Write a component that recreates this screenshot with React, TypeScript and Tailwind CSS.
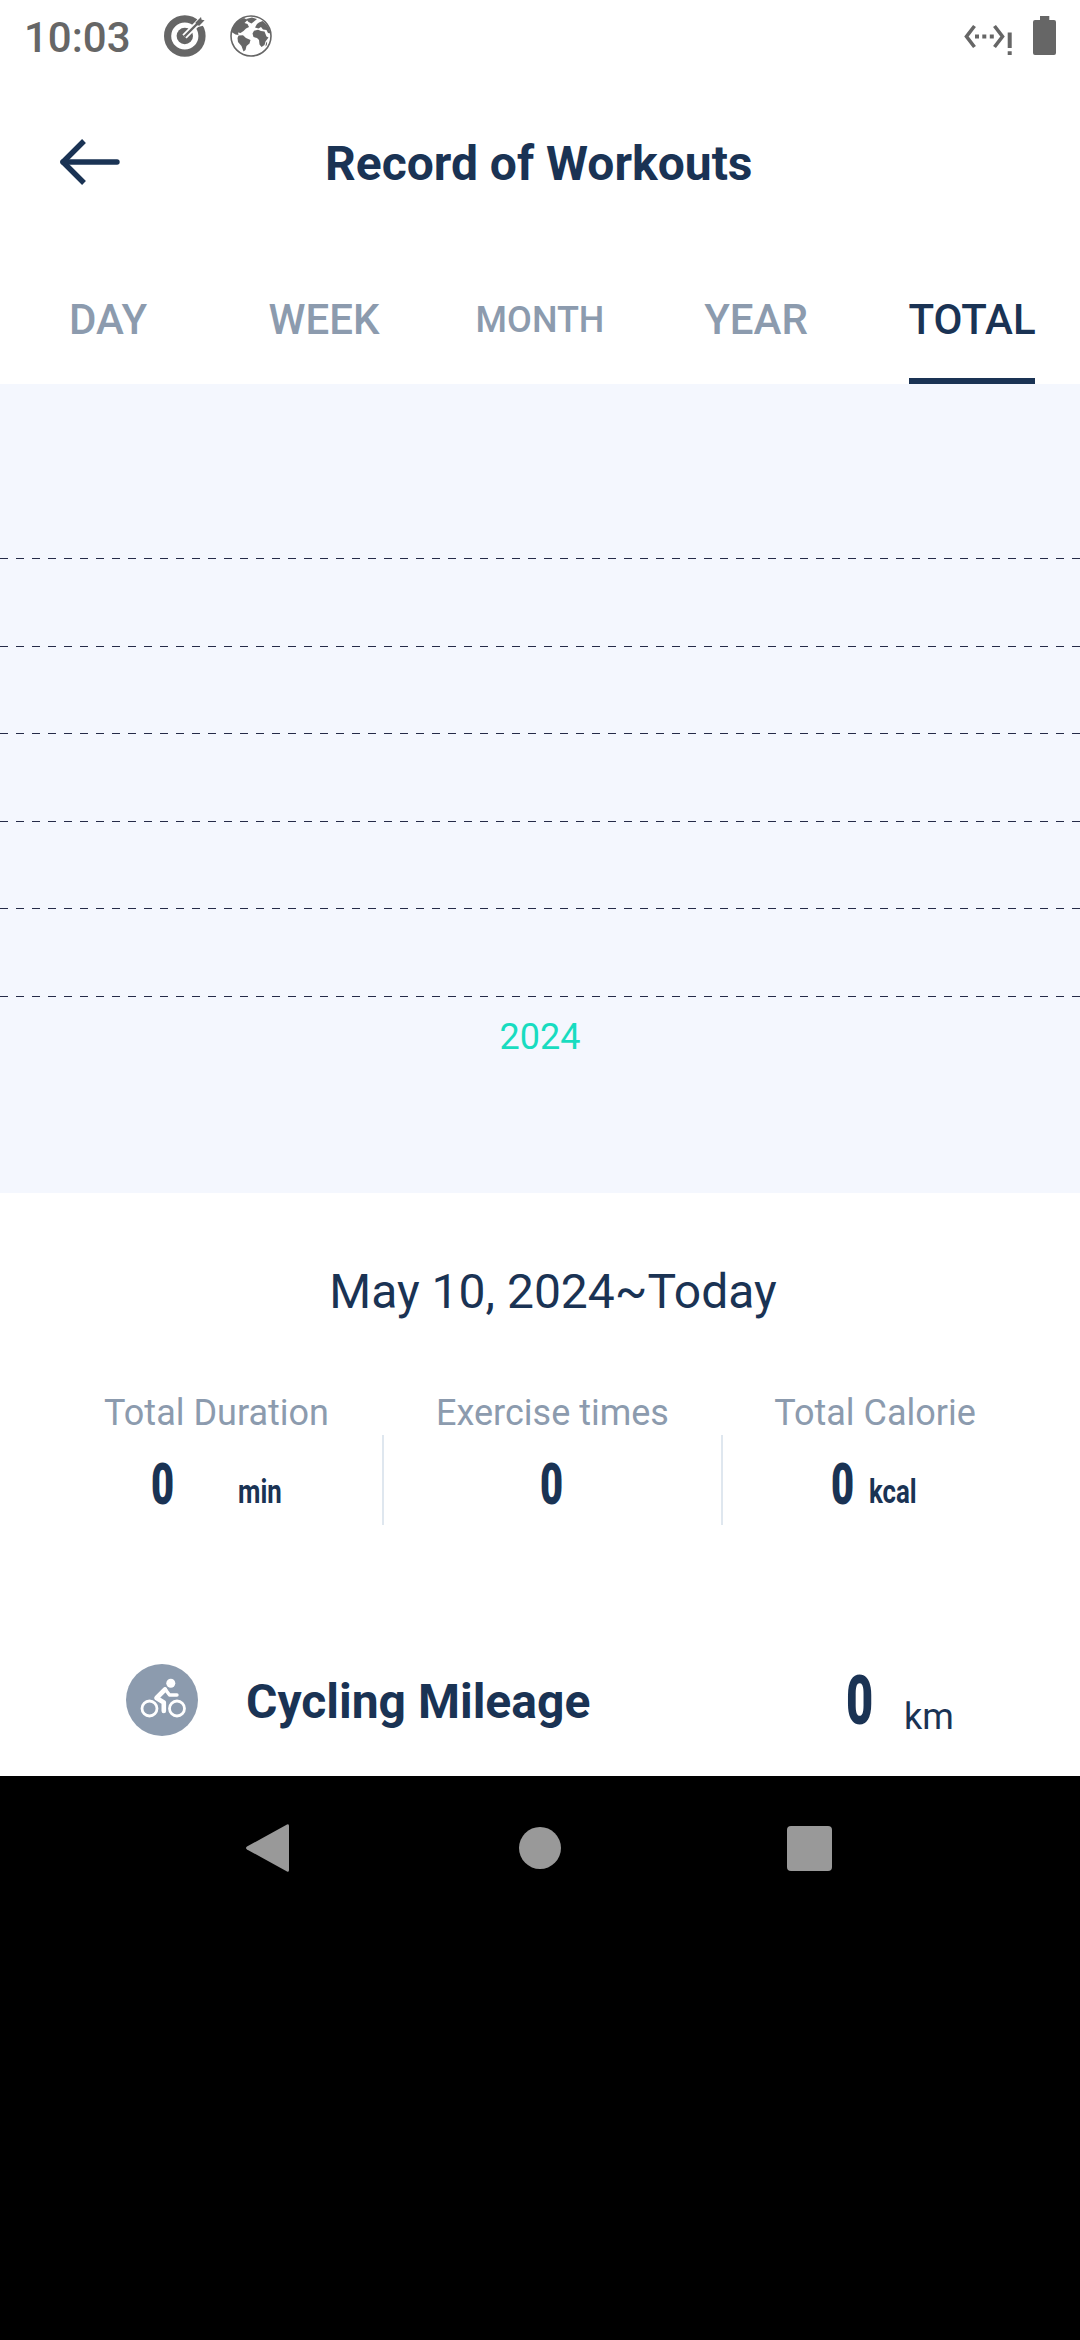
const gridLines = [174, 262, 349, 437, 524, 612];

const tabs = [
  { label: 'DAY', cls: 'text-[42px] pt-[43px]' },
  { label: 'WEEK', cls: 'text-[42px] pt-[43px]' },
  { label: 'MONTH', cls: 'text-[36px] pt-[46px]' },
  { label: 'YEAR', cls: 'text-[42px] pt-[43px]' },
];

function TargetIcon() {
  return (
    <svg className="ml-[36px] h-[42px] w-[42px]" viewBox="0 0 42 42" fill="none">
      <circle cx="20.8" cy="21" r="17.2" stroke="#666" strokeWidth="7.2" />
      <circle cx="20.8" cy="21" r="8.2" fill="#666" />
      <path d="M20.5 21.5 L36 6" stroke="#fff" strokeWidth="6" />
      <path d="M31 8 L36 1 L42 0 L42 10 L34 12 Z" fill="#fff" />
      <path d="M20.5 21.5 L35 7" stroke="#666" strokeWidth="2.4" />
      <path d="M31.5 7.5 L37 2 L37.6 4.8 L40.6 5.3 L35.3 10.8 L32.2 10 Z" fill="#666" />
    </svg>
  );
}

function GlobeIcon() {
  return (
    <svg className="ml-[24px] h-[42px] w-[42px]" viewBox="0 0 42 42" fill="none">
      <circle cx="21" cy="21" r="20" stroke="#666" strokeWidth="1.6" />
      <path d="M14 3 L17.5 5 L14.5 8 L17.5 9 L19 12 L16 13.5 L13.5 16 L10.5 18 L8 17.5 L8.5 20 L5.5 19.5 L1.5 17 C2.5 10.5 7.5 5 14 3 Z" fill="#666" />
      <path d="M16 4 L22 2.6 L27 4 L24 6.5 L21.5 8.5 L18.5 7 Z" fill="#666" />
      <path d="M8.5 20.5 L13 20.2 L16 23 L20.5 25 L19.5 28.5 L16.5 31 L15.5 35 L13.5 36.5 L11.5 31 L8 27 L7.5 23 Z" fill="#666" />
      <path d="M24 15.8 L28 14.8 L31 16 L34.5 16.5 L36.5 21.5 L38.5 22.5 L35.5 26.5 L34.5 30 L31.5 32 L29.5 29.5 L29 25 L27 23 L23.5 22 L22.5 18.5 Z" fill="#666" />
      <path d="M25 12.5 L27 9 L29 7.5 L32.5 6 C37 9.5 39.8 13 40.6 18.5 L38 18 L36.5 15 L33 14.5 L31 12 L28.5 13.5 Z" fill="#666" />
      <path d="M36 28 L37.2 26.5 L36.8 30 L35.5 31.5 Z" fill="#666" />
    </svg>
  );
}

function StatusBar() {
  return (
    <div className="flex h-[72px] items-start pt-[15px]">
      <span className="ml-[24px] mt-[2px] w-[104px] whitespace-nowrap text-[42px] font-medium leading-none text-[#666666]">10:03</span>
      <TargetIcon />
      <GlobeIcon />
      <svg className="ml-auto mt-[8px] h-[34px] w-[49px]" viewBox="0 0 49 34" fill="none">
        <path d="M10.5 3 L2.5 13.5 L10.5 24 M30.5 3 L38.5 13.5 L30.5 24" stroke="#666" strokeWidth="3.6" />
        <path d="M11 11.5h4v4h-4z M18.3 11.5h4v4h-4z M25.8 11.5h4v4h-4z M43.7 9.5h4v15.5h-4z M43.7 28.3h4v3.7h-4z" fill="#666" />
      </svg>
      <svg className="ml-[20px] mr-[24px] mt-px h-[39px] w-[23px]" viewBox="0 0 23 39">
        <path d="M7 0h9.3v4H21q2 0 2 2v31q0 2-2 2H2q-2 0-2-2V6q0-2 2-2h5z" fill="#666" />
      </svg>
    </div>
  );
}

function Num({ big = false }: { big?: boolean }) {
  return big ? (
    <span className="inline-block origin-left scale-x-[0.69] text-[68px] font-black leading-none">0</span>
  ) : (
    <span className="inline-block origin-left scale-x-[0.7] text-[57px] font-black leading-none">0</span>
  );
}

function Unit({ children }: { children: string }) {
  return <span className="relative -top-px inline-block origin-left scale-x-[0.76] text-[34px] font-bold leading-none">{children}</span>;
}

export default function App() {
  return (
    <div className="flex h-[2340px] w-[1080px] flex-col overflow-hidden bg-black font-['Roboto',sans-serif]">
      <div className="flex h-[1776px] flex-col bg-white text-[#1a3354]">
        <StatusBar />

        <header className="flex h-[184px] items-start">
          <svg className="ml-[58px] mt-[66px] h-[48px] w-[64px]" viewBox="0 0 64 48" fill="none" stroke="#1a3354" strokeWidth="5.4">
            <path d="M26 3 L5 24 L26 45" strokeLinejoin="round" />
            <path d="M5 24 H59" strokeLinecap="round" />
          </svg>
          <h1 className="ml-[203px] mt-[68px] whitespace-nowrap text-[48px] font-bold leading-none">Record of Workouts</h1>
        </header>

        <nav className="grid h-[128px] grid-cols-5 text-center font-medium leading-none">
          {tabs.map((t) => (
            <div key={t.label} className={'leading-none text-[#8c9bae] ' + t.cls}>{t.label}</div>
          ))}
          <div className="flex flex-col items-center pt-[43px] text-[42px] leading-none">
            <span>TOTAL</span>
            <div className="mt-auto h-[6px] w-[126px] bg-[#1a3354]" />
          </div>
        </nav>

        <section className="h-[809px] bg-[#f4f7fe]">
          <svg className="block h-[613px] w-[1080px]" viewBox="0 0 1080 613" shapeRendering="crispEdges">
            {gridLines.map((y) => (
              <line key={y} x1="0" x2="1080" y1={y + 0.5} y2={y + 0.5} stroke="#252b48" strokeWidth="1" strokeDasharray="8 8" />
            ))}
          </svg>
          <div className="pt-[22px] text-center text-[36px] leading-none text-[#18dcc0]">2024</div>
        </section>

        <h2 className="ml-[26px] pt-[75px] text-center text-[48px] leading-none">May 10, 2024~Today</h2>

        <section className="mt-[79px] flex h-[130px] pl-[51px]">
          <div className="w-[331px]">
            <div className="text-center text-[36px] leading-none text-[#8c9bae]">Total Duration</div>
            <div className="flex items-baseline pt-[25px]">
              <div className="ml-[100px] w-[87px]"><Num /></div>
              <Unit>min</Unit>
            </div>
          </div>
          <div className="mt-[40px] h-[90px] w-[2px] bg-[#dfe7ef]" />
          <div className="w-[337px]">
            <div className="text-center text-[36px] leading-none text-[#8c9bae]">Exercise times</div>
            <div className="pl-[156px] pt-[25px]"><Num /></div>
          </div>
          <div className="mt-[40px] h-[90px] w-[2px] bg-[#dfe7ef]" />
          <div className="w-[304px]">
            <div className="text-center text-[36px] leading-none text-[#8c9bae]">Total Calorie</div>
            <div className="flex items-baseline pt-[25px]">
              <div className="ml-[108px] w-[38px]"><Num /></div>
              <Unit>kcal</Unit>
            </div>
          </div>
        </section>

        <section className="mt-[139px] flex items-start">
          <svg className="ml-[126px] h-[72px] w-[72px]" viewBox="0 0 72 72" fill="none">
            <circle cx="36" cy="36" r="36" fill="#8c9bae" />
            <circle cx="23.5" cy="44.5" r="7.5" stroke="#fff" strokeWidth="2.8" />
            <circle cx="51" cy="44.5" r="7.5" stroke="#fff" strokeWidth="2.8" />
            <circle cx="44.8" cy="19.2" r="4.5" fill="#fff" />
            <path d="M39 25.5 L30.5 34 L37.8 38.5 V47" stroke="#fff" strokeWidth="4.6" strokeLinecap="round" strokeLinejoin="round" />
            <path d="M39 25 L43.5 31 H51" stroke="#fff" strokeWidth="3.4" strokeLinecap="round" strokeLinejoin="round" />
          </svg>
          <span className="ml-[48px] mt-[14px] w-[600px] whitespace-nowrap text-[48px] font-bold leading-none">Cycling Mileage</span>
          <div className="mt-[3px] w-[58px]"><Num big /></div>
          <span className="mt-[35px] text-[36px] leading-none">km</span>
        </section>
      </div>

      <div className="flex h-[144px] items-center">
        <svg className="ml-[245px] h-[50px] w-[45px]" viewBox="0 0 45 50"><path d="M42 1.5 Q44 .5 44 3 V47 Q44 49.5 42 48.5 L2 26.5 Q0 25 2 23.5 Z" fill="#999" /></svg>
        <div className="ml-[229px] h-[42px] w-[42px] rounded-full bg-[#999999]" />
        <div className="ml-[226px] h-[45px] w-[45px] rounded-[4px] bg-[#999999]" />
      </div>
    </div>
  );
}
